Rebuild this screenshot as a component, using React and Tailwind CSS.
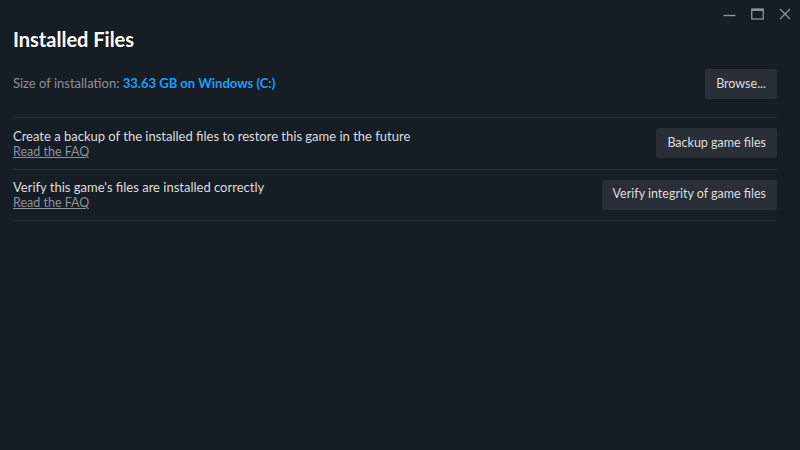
import { useState } from 'react';

const font = { fontFamily: 'Lato, "Noto Sans", Arial, sans-serif' };

const WindowControls = () => (
  <div className="flex justify-end items-center gap-[15px] pr-[9px] pt-[6px] h-[22px]">
    <svg width="13" height="12" viewBox="0 0 13 12" className="text-[#8b929a]">
      <path d="M0.5 7.5h12" stroke="currentColor" strokeWidth="1.4" />
    </svg>
    <svg width="13" height="12" viewBox="0 0 13 12" className="text-[#8b929a]">
      <rect x="0.75" y="1" width="11.5" height="10" fill="none" stroke="currentColor" strokeWidth="1.3" />
      <path d="M0.75 2h11.5" stroke="currentColor" strokeWidth="2" />
    </svg>
    <svg width="12" height="12" viewBox="0 0 12 12" className="text-[#8b929a]">
      <path d="M1 1l10 10M11 1L1 11" stroke="currentColor" strokeWidth="1.3" />
    </svg>
  </div>
);

const Button = ({ children }) => (
  <button className="h-[30px] px-[11px] rounded-[2px] bg-[#2a2e36] text-[#dcdedf] text-[12.5px] hover:bg-[#3d4450]">
    {children}
  </button>
);

const ActionRow = ({ label, action }) => (
  <div className="flex items-center justify-between border-b border-[#262b33] h-[51.5px]">
    <div className="flex flex-col pt-[1px]">
      <span className="text-[13px] text-[#dcdedf] leading-[16px]">{label}</span>
      <a href="#" className="text-[12.5px] text-[#8b929a] underline leading-[16px]">Read the FAQ</a>
    </div>
    <Button>{action}</Button>
  </div>
);

export default function App() {
  const [size] = useState('33.63 GB on Windows (C:)');
  return (
    <div className="w-[800px] h-[450px] bg-[#171d25] overflow-hidden" style={font}>
      <WindowControls />
      <div className="pl-[13px] pr-[23px]">
        <h1 className="text-[20px] font-bold text-white leading-[24px] mt-[5px]">Installed Files</h1>
        <div className="flex items-center justify-between mt-[18px] pb-[18px] border-b border-[#262b33]">
          <p className="text-[13px] text-[#8b929a]">
            Size of installation: <span className="text-[#1a9fff] font-bold">{size}</span>
          </p>
          <Button>Browse...</Button>
        </div>
        <ActionRow label="Create a backup of the installed files to restore this game in the future" action="Backup game files" />
        <ActionRow label="Verify this game's files are installed correctly" action="Verify integrity of game files" />
      </div>
    </div>
  );
}
